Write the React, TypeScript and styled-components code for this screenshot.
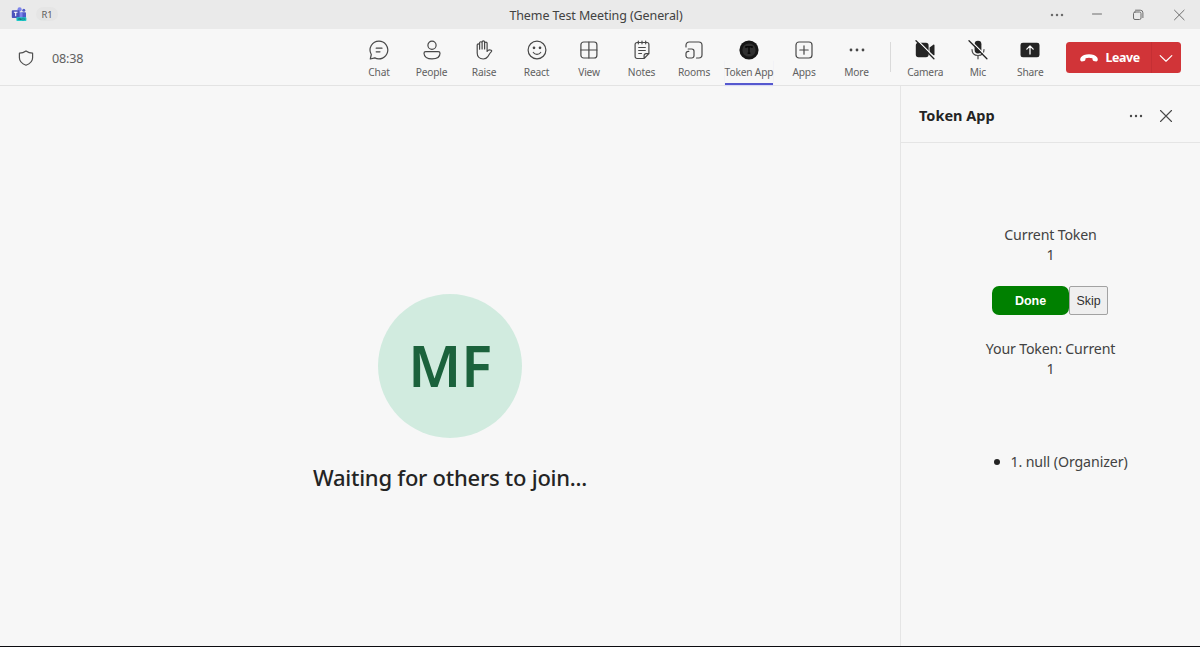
import React from "react";
import styled, { createGlobalStyle } from "styled-components";

const Global = createGlobalStyle`
  *, *::before, *::after { box-sizing: border-box; }
  html, body { margin: 0; padding: 0; overflow: hidden; }
  body { font-family: "Noto Sans", "Open Sans", sans-serif; color: #242424; background: #f7f7f7; }
  svg { display: block; flex: none; }
`;

const Window = styled.div`
  display: flex;
  flex-direction: column;
  width: 1200px;
  height: 647px;
  background: #f7f7f7;
  border-bottom: 1px solid #0c0c10;
`;

const TitleBar = styled.header`
  display: grid;
  grid-template-columns: 1fr auto 1fr;
  align-items: center;
  height: 29px;
  flex: none;
  background: #eaeaea;
`;

const TitleLeft = styled.div`
  display: flex;
  align-items: center;
  gap: 9px;
  padding-left: 11px;
`;

const Badge = styled.span`
  display: flex;
  align-items: center;
  justify-content: center;
  width: 22px;
  height: 14px;
  margin-top: -1px;
  border-radius: 7px;
  background: #e5e5e5;
  color: #5c5c5c;
  font-size: 9.4px;
  letter-spacing: -0.2px;
`;

const Title = styled.h1`
  margin: 0;
  padding-top: 2px;
  padding-right: 8px;
  font-size: 12.5px;
  line-height: 18px;
  font-weight: 400;
  letter-spacing: -0.1px;
  color: #424242;
`;

const WindowControls = styled.div`
  display: flex;
  justify-content: flex-end;
  align-items: center;
  padding-right: 14px;
  color: #6c6c6c;
`;

const Control = styled.span<{ $gap: number }>`
  display: flex;
  justify-content: center;
  width: 14px;
  margin-left: ${(p) => p.$gap}px;
`;

const Toolbar = styled.nav`
  display: flex;
  height: 57px;
  flex: none;
  border-bottom: 1px solid #e3e3e3;
`;

const Status = styled.div`
  display: flex;
  align-items: center;
  width: 352.75px;
  padding: 1px 0 0 18px;
  color: #505050;
`;

const Timer = styled.span`
  margin-left: 18px;
  padding-top: 2px;
  font-size: 12.6px;
  letter-spacing: -0.2px;
  color: #616161;
`;

const Tool = styled.div<{ $wide?: boolean }>`
  display: flex;
  flex-direction: column;
  align-items: center;
  width: ${(p) => (p.$wide ? 57.5 : 52.5)}px;
  padding-top: 11px;
  color: #484848;
`;

const ToolLabel = styled.span<{ $active?: boolean }>`
  height: 25px;
  padding-top: 5px;
  font-size: 10.2px;
  line-height: 15px;
  letter-spacing: -0.17px;
  white-space: nowrap;
  color: #616161;
  border-bottom: ${(p) => (p.$active ? "2px solid #5558cf" : "0")};
  box-shadow: ${(p) => (p.$active ? "0 1px 1px #d9daf4" : "none")};
`;

const Divider = styled.div`
  width: 1px;
  height: 30px;
  margin: 13px 8px 0 7.25px;
  background: #dadada;
`;

const LeaveGroup = styled.div`
  display: flex;
  width: 115.5px;
  height: 30.5px;
  margin: 13.25px 0 0 9px;
  border-radius: 3.5px;
  overflow: hidden;
  background: #d13438;
  color: #fff;
`;

const Leave = styled.div`
  display: flex;
  align-items: center;
  gap: 8px;
  width: 86px;
  padding-left: 14px;
  border-right: 1px solid #c52f34;
  font-size: 12.4px;
  font-weight: 700;
  letter-spacing: -0.4px;
`;

const LeaveMenu = styled.div`
  display: flex;
  flex: 1;
  align-items: center;
  justify-content: center;
  padding-right: 1px;
`;

const Main = styled.main`
  display: flex;
  flex: 1;
  min-height: 0;
`;

const Stage = styled.section`
  display: flex;
  flex-direction: column;
  align-items: center;
  width: 900px;
  padding-top: 208px;
`;

const Avatar = styled.div`
  display: flex;
  align-items: center;
  justify-content: center;
  width: 144px;
  height: 144px;
  padding-bottom: 2px;
  border-radius: 50%;
  background: #d1ebdf;
  color: #1b623c;
  font-size: 57px;
  font-weight: 600;
`;

const Waiting = styled.p`
  margin: 23px 0 0;
  font-size: 22px;
  line-height: 32px;
  font-weight: 500;
  letter-spacing: -0.25px;
  white-space: nowrap;
`;

const Panel = styled.aside`
  display: flex;
  flex-direction: column;
  width: 300px;
  border-left: 1px solid #e5e5e5;
`;

const PanelHeader = styled.div`
  display: flex;
  align-items: center;
  height: 57px;
  padding: 3px 27px 0 18px;
  border-bottom: 1px solid #e5e5e5;
  color: #484848;
`;

const PanelTitle = styled.h2`
  flex: 1;
  margin: 0;
  padding-bottom: 2px;
  font-size: 14.5px;
  font-weight: 700;
  color: #242424;
`;

const PanelClose = styled.span`
  margin-left: 16px;
`;

const PanelBody = styled.div`
  display: flex;
  flex-direction: column;
  align-items: center;
  padding-top: 82px;
  color: #424242;
  font-size: 14.2px;
  line-height: 20px;
  letter-spacing: -0.17px;
  text-align: center;
`;

const TokenLine = styled.div`
  white-space: nowrap;
`;

const Actions = styled.div`
  display: flex;
  margin: 21px 1px 24px 0;
`;

const DoneButton = styled.button`
  width: 77px;
  height: 29px;
  padding: 0;
  border: 0;
  border-radius: 7px;
  background: #008000;
  color: #fff;
  font: 700 12.5px "Liberation Sans", sans-serif;
`;

const SkipButton = styled.button`
  width: 39px;
  height: 29px;
  padding: 0;
  border: 1px solid #a2a2a2;
  border-radius: 2px;
  background: #efefef;
  color: #303030;
  font: 400 12.4px "Liberation Sans", sans-serif;
`;

const TokenList = styled.ul`
  margin: 73px 0 0;
  padding: 0 0 0 21px;
  list-style: none;
`;

const TokenItem = styled.li`
  display: flex;
  align-items: center;
  gap: 10px;
  white-space: nowrap;
  letter-spacing: -0.1px;

  &::before {
    content: "";
    width: 6px;
    height: 6px;
    border-radius: 50%;
    background: #242424;
  }
`;

type IconProps = { children: React.ReactNode; size?: number; width?: number };
const Icon = ({ children, size = 20, width = 1.2 }: IconProps) => (
  <svg width={size} height={size} viewBox={`0 0 ${size} ${size}`} fill="none" stroke="currentColor" strokeWidth={width} strokeLinecap="round" strokeLinejoin="round">
    {children}
  </svg>
);

const Dots = ({ size, r, step }: { size: number; r: number; step: number }) => (
  <svg width={size} height={size} viewBox={`0 0 ${size} ${size}`} fill="currentColor">
    {[-1, 0, 1].map((n) => (
      <circle key={n} cx={size / 2 + n * step} cy={size / 2} r={r} />
    ))}
  </svg>
);

const TeamsLogo = () => (
  <svg width="16" height="15" viewBox="0 0 16 15">
    <circle cx="12.8" cy="3.2" r="1.5" fill="#5059c9" />
    <circle cx="8.6" cy="2.4" r="2.1" fill="#7b83eb" />
    <path d="M10.5 5.3h3.7c.5 0 .8.4.8.8v3.6c0 1.6-1 2.6-2.3 2.6h-2.2z" fill="#5059c9" />
    <path d="M5.5 5.3h6v5.2c0 1.8-1.5 3-3 3s-3-1.2-3-3z" fill="#7b83eb" />
    <rect x="0.8" y="3.2" width="7.8" height="7.8" rx="0.8" fill="#4b53bc" />
    <path d="M2.9 5.3h3.6M4.7 5.3v4" stroke="#fff" strokeWidth="1.1" />
    <rect x="5.4" y="10.2" width="10" height="3.8" rx="0.8" fill="#20c9c9" />
    <path d="M7.2 11.3v1.6M8.8 12.9v-1.6l1.3 1.6v-1.6M11.4 11.4h1.2M11.4 12.8h1.2M13.8 11.3v1.6" stroke="#17494d" strokeWidth=".7" fill="none" />
  </svg>
);

const icons: Record<string, React.ReactNode> = {
  Chat: (
    <Icon>
      <path d="M10 1.1a8.9 8.9 0 1 1-4.2 16.8L1.3 19l1-4.5A8.9 8.9 0 0 1 10 1.1zM7.2 8.2h5.8M7.2 11.8h3.8" />
    </Icon>
  ),
  People: (
    <Icon>
      <circle cx="10" cy="5.2" r="4.1" />
      <path d="M3.7 11.6h12.6c1 0 1.7.7 1.7 1.7 0 3.6-3.4 5.6-8 5.6s-8-2-8-5.6c0-1 .7-1.7 1.7-1.7z" />
    </Icon>
  ),
  Raise: (
    <Icon>
      <path d="M3.2 9V5a1.15 1.15 0 0 1 2.4 0v4.2V3a1.2 1.2 0 0 1 2.5 0v6V2.2a1.2 1.2 0 0 1 2.5 0V9V3.3a1.2 1.2 0 0 1 2.5 0v8.2c1-1.5 2.5-1.9 4.1-1.2.6.3.6.8.2 1.3-1.8 1.6-2.4 3.3-3.6 5-1 1.5-2.4 2.4-4.6 2.4-3.5 0-6-2.3-6-6zM5.6 4.5v4.500M8.100 3v6M10.600 3.500v5.500" />
    </Icon>
  ),
  React: (
    <Icon>
      <circle cx="10" cy="10" r="8.9" />
      <path d="M6.3 12.5c1.8 2.4 5.6 2.4 7.4 0" />
      <circle cx="7" cy="7.8" r=".75" fill="currentColor" />
      <circle cx="13" cy="7.8" r=".75" fill="currentColor" />
    </Icon>
  ),
  View: (
    <Icon>
      <rect x="1.9" y="2" width="16" height="16" rx="2.8" />
      <path d="M9.9 2v16M1.9 10h16" />
    </Icon>
  ),
  Notes: (
    <Icon>
      <path d="M5 2.5h10a1.9 1.9 0 0 1 1.9 1.9v9.3l-4.8 4.8H5a1.9 1.9 0 0 1-1.9-1.9V4.4A1.9 1.9 0 0 1 5 2.5zM16.9 13.7H14a1.9 1.9 0 0 0-1.9 1.9v2.9M6.3 1.2v2.6M10 1.2v2.6M13.7 1.2v2.6M6.7 7.5h6.6M6.7 10.5h6.6M6.7 13.5h2.8" />
    </Icon>
  ),
  Rooms: (
    <Icon>
      <path d="M2 7V5.2A3.2 3.2 0 0 1 5.2 2h9.6A3.2 3.2 0 0 1 18 5.2v9.6a3.2 3.2 0 0 1-3.2 3.2h-2.3" />
      <path d="M4.200 9h3.600a2.200 2.200 0 0 1 2.200 2.200v4.600A2.200 2.200 0 0 1 7.800 18H4.200A2.200 2.200 0 0 1 2 15.800v-2.200a2.200 2.200 0 0 1 2.200-2.200h.6" />
    </Icon>
  ),
  "Token App": (
    <svg width="20" height="20" viewBox="0 0 20 20">
      <circle cx="10" cy="10" r="9.6" fill="#161616" />
      <circle cx="10" cy="10" r="6.6" fill="#303030" />
      <path d="M7 8V6.8h6V8M10 6.8v6.4M8.6 13.2h2.8" stroke="#080808" strokeWidth="1.5" fill="none" />
    </svg>
  ),
  Apps: (
    <Icon>
      <rect x="2" y="2" width="16" height="16" rx="3" />
      <path d="M10 5.8v8.4M5.8 10h8.4" />
    </Icon>
  ),
  More: <Dots size={20} r={1.4} step={6} />,
  Camera: (
    <Icon>
      <g fill="#242424" stroke="none">
        <rect x="0.8" y="2.8" width="12.8" height="14.4" rx="2.6" />
        <path d="M14.6 7.6l3.7-2.9c.5-.4 1.2 0 1.2.6v9.4c0 .6-.7 1-1.2.6l-3.7-2.9z" />
      </g>
      <path d="M2.4.3l17.7 17.7" stroke="#f7f7f7" strokeWidth="1.3" />
      <path d="M1 .8l17.9 17.9" stroke="#242424" strokeWidth="1.3" />
    </Icon>
  ),
  Mic: (
    <Icon>
      <rect x="6.6" y="0.8" width="6.8" height="12.6" rx="3.4" fill="#242424" stroke="none" />
      <path d="M4 9.5c0 3.8 2.5 6 6 6s6-2.2 6-6M10 15.5v3.3" />
      <path d="M2.3.3l17.7 17.7" stroke="#f7f7f7" strokeWidth="1.3" />
      <path d="M1 .8l17.9 17.9" stroke="#242424" strokeWidth="1.3" />
    </Icon>
  ),
  Share: (
    <Icon>
      <rect x="0.5" y="2.7" width="19" height="14.6" rx="2.4" fill="#242424" stroke="none" />
      <path d="M10 14V6M6.8 9.1L10 5.9l3.2 3.2" stroke="#fff" strokeWidth="1.3" />
    </Icon>
  ),
};

const meetingTools = ["Chat", "People", "Raise", "React", "View", "Notes", "Rooms", "Token App", "Apps", "More"];
const deviceTools = ["Camera", "Mic", "Share"];

const ToolItem = ({ name }: { name: string }) => {
  const active = name === "Token App";
  return (
    <Tool $wide={active}>
      {icons[name]}
      <ToolLabel $active={active}>{name}</ToolLabel>
    </Tool>
  );
};

export default function App() {
  return (
    <>
      <Global />
      <Window>
        <TitleBar>
          <TitleLeft>
            <TeamsLogo />
            <Badge>R1</Badge>
          </TitleLeft>
          <Title>Theme Test Meeting (General)</Title>
          <WindowControls>
            <Control $gap={0}><Dots size={14} r={1.25} step={5} /></Control>
            <Control $gap={26}><Icon size={12} width={1}><path d="M1.5 5h9" /></Icon></Control>
            <Control $gap={27}>
              <Icon size={12} width={1}>
                <rect x="1.5" y="3" width="7.5" height="7.5" rx="1.5" />
                <path d="M3.5 1.2h4.8a2.6 2.6 0 0 1 2.6 2.6v4.8" />
              </Icon>
            </Control>
            <Control $gap={27}><Icon size={12} width={1}><path d="M1.5 1.2l9.6 9.6M11.1 1.2L1.5 10.8" /></Icon></Control>
          </WindowControls>
        </TitleBar>
        <Toolbar>
          <Status>
            <Icon size={16} width={1.2}>
              <path d="M8 .9c1.900 1.400 4 2.200 6.600 2.300v4.500c0 3.400-2.300 5.900-6.600 7.500-4.300-1.600-6.600-4.100-6.600-7.500V3.200C4 3.100 6.100 2.300 8 .9z" />
            </Icon>
            <Timer>08:38</Timer>
          </Status>
          {meetingTools.map((name) => <ToolItem key={name} name={name} />)}
          <Divider />
          {deviceTools.map((name) => <ToolItem key={name} name={name} />)}
          <LeaveGroup>
            <Leave>
              <svg width="18" height="8" viewBox="0 0 18 8" fill="currentColor">
                <path d="M9 .3c3.7 0 6.7 1 8 2.9.8 1.1 1 2.3.6 3.4-.2.6-.8.9-1.400.8l-2.500-.5c-.6-.1-1-.6-1.100-1.200l-.2-1.500C10.300 3.500 7.700 3.500 5.600 4.200l-.2 1.500c-.1.600-.5 1.100-1.100 1.200l-2.500.5c-.6.100-1.200-.2-1.400-.8C0 5.500.2 4.300 1 3.200 2.300 1.300 5.300.3 9 .3z" />
              </svg>
              Leave
            </Leave>
            <LeaveMenu>
              <Icon size={14} width={1.2}><path d="M1.2 4.600L7 10.200l5.800-5.600" /></Icon>
            </LeaveMenu>
          </LeaveGroup>
        </Toolbar>
        <Main>
          <Stage>
            <Avatar>MF</Avatar>
            <Waiting>Waiting for others to join...</Waiting>
          </Stage>
          <Panel>
            <PanelHeader>
              <PanelTitle>Token App</PanelTitle>
              <Dots size={14} r={1.2} step={5} />
              <PanelClose>
                <Icon size={14} width={1.1}><path d="M1.5 1.5l11 11M12.5 1.5l-11 11" /></Icon>
              </PanelClose>
            </PanelHeader>
            <PanelBody>
              <TokenLine>Current Token</TokenLine>
              <TokenLine>1</TokenLine>
              <Actions>
                <DoneButton>Done</DoneButton>
                <SkipButton>Skip</SkipButton>
              </Actions>
              <TokenLine>Your Token: Current</TokenLine>
              <TokenLine>1</TokenLine>
              <TokenList>
                <TokenItem>1. null (Organizer)</TokenItem>
              </TokenList>
            </PanelBody>
          </Panel>
        </Main>
      </Window>
    </>
  );
}
